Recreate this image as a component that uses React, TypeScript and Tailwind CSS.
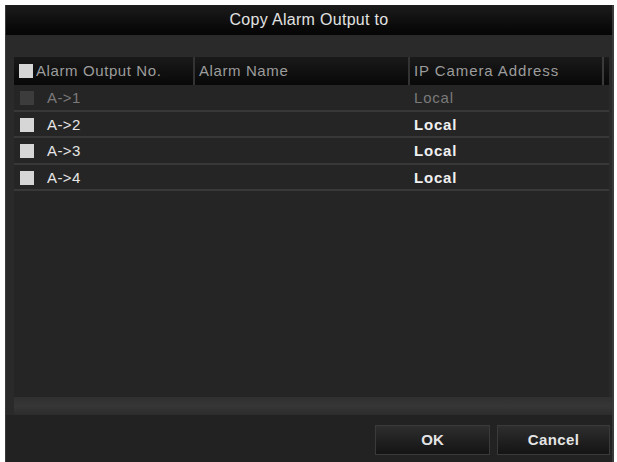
import React from "react";

const rows = [
  { no: "A->1", ip: "Local", disabled: true },
  { no: "A->2", ip: "Local" },
  { no: "A->3", ip: "Local" },
  { no: "A->4", ip: "Local" },
];

const Box = ({ disabled }: { disabled?: boolean }) => (
  <span
    className={
      "block w-[14px] h-[14px] shrink-0 " +
      (disabled ? "bg-[#3c3c3c]" : "bg-[#d6d6d6]")
    }
  />
);

export default function App() {
  return (
    <div className="w-[617px] h-[462px] bg-white pt-[5px] pl-[5px] pr-[3px] overflow-hidden font-['Liberation_Sans',Arial,sans-serif]">
      <div className="h-full flex flex-col bg-[#2a2a2a] border-l border-[#3a3a3a] border-r-2 border-r-[#3a3a3a]">
        {/* title */}
        <div className="h-[30px] shrink-0 flex items-center justify-center bg-gradient-to-b from-[#1c1c1c] to-[#050505] text-[16px] tracking-[0.3px] text-[#e2e2e2]">
          Copy Alarm Output to
        </div>

        {/* table */}
        <div className="mt-[22px] ml-[8px] mr-[3px] h-[340px] bg-[#252525] flex flex-col">
          <div className="h-[28px] shrink-0 flex bg-gradient-to-b from-[#1a1a1a] to-[#080808] text-[15px] tracking-[0.6px] text-[#9c9c9c]">
            <div className="w-[181px] flex items-center gap-[3px] pl-[5px] border-r-2 border-[#333]">
              <Box />
              <span>Alarm Output No.</span>
            </div>
            <div className="w-[215px] flex items-center pl-[4px] border-r-2 border-[#333]">
              Alarm Name
            </div>
            <div className="w-[194px] flex items-center pl-[4px] tracking-[0.9px] border-r-2 border-[#3a3a3a]">
              IP Camera Address
            </div>
          </div>
          {rows.map((r) => (
            <div
              key={r.no}
              className="h-[26.6px] pt-[2px] shrink-0 flex items-center border-b-2 border-[#383838] text-[15px] tracking-[0.4px]"
            >
              <div className="w-[181px] flex items-center gap-[13px] pl-[6px]">
                <Box disabled={r.disabled} />
                <span className={r.disabled ? "text-[#7a7a7a]" : "text-[#e6e6e6]"}>
                  {r.no}
                </span>
              </div>
              <div className="w-[215px]" />
              <div
                className={
                  "pl-[4px] tracking-[0.8px] " +
                  (r.disabled ? "text-[#7a7a7a]" : "text-[#f0f0f0] font-bold")
                }
              >
                {r.ip}
              </div>
            </div>
          ))}
        </div>

        {/* scroll band */}
        <div className="ml-[8px] h-[18px] shrink-0 bg-gradient-to-b from-[#303030] via-[#363636] to-[#2c2c2c]" />

        {/* footer */}
        <div className="flex-1 bg-[#222] flex justify-end gap-[7px] pt-[10px] pr-[2px]">
          <button className="w-[115px] h-[30px] bg-gradient-to-b from-[#2e2e2e] to-[#141414] border border-[#3a3a3a] text-[15px] font-bold text-[#e4e4e4]">
            OK
          </button>
          <button className="w-[113px] h-[30px] bg-gradient-to-b from-[#2e2e2e] to-[#141414] border border-[#3a3a3a] text-[15px] font-bold text-[#e4e4e4] tracking-[0.4px]">
            Cancel
          </button>
        </div>
      </div>
    </div>
  );
}
